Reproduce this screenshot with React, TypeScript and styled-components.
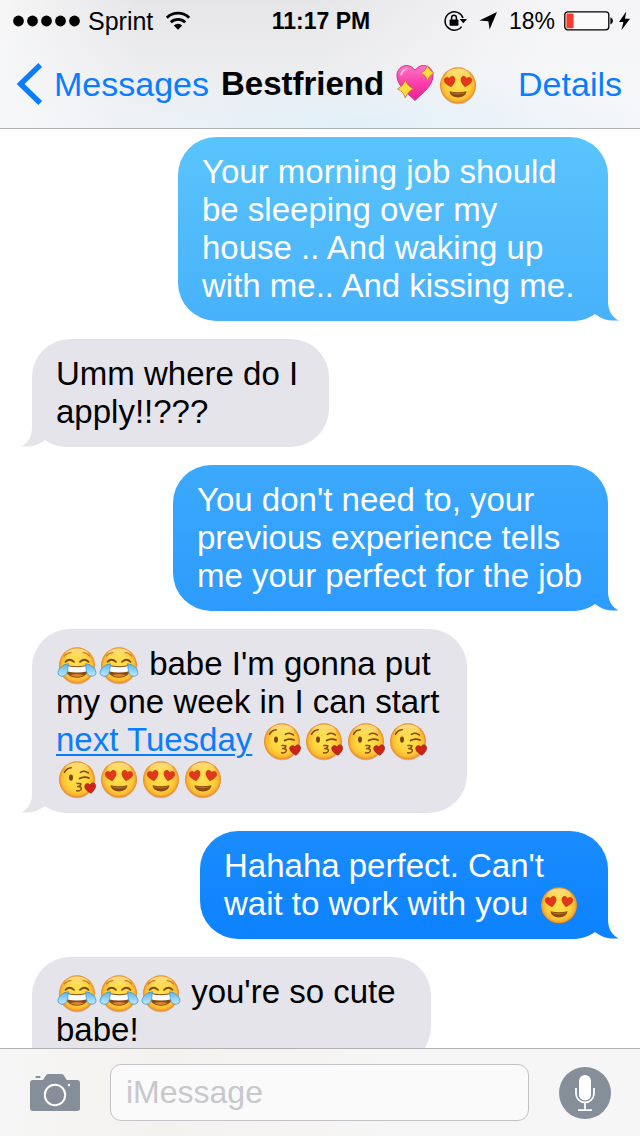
import React, { useId } from "react";
import styled, { createGlobalStyle, css } from "styled-components";

const GlobalStyle = createGlobalStyle`
  * { box-sizing: border-box; }
  html, body { margin: 0; padding: 0; }
  body {
    background: #fff;
    color: #000;
    font-family: "Liberation Sans", Arial, sans-serif;
  }
`;

const BLUE = "#0a7cff";
const SLATE = "#868f99";
const GRAY = "#e5e4ea";
const LINE_HEIGHT = 38;
const BUBBLE_PAD = 16;

const Screen = styled.main`
  display: flex;
  flex-direction: column;
  height: 100vh;
  overflow: hidden;
`;

const Header = styled.header`
  flex: none;
  border-bottom: 1px solid #b0b1b4;
  background:
    radial-gradient(ellipse 50% 50% at 56% 100%, rgba(222, 239, 250, 0.8), rgba(222, 239, 250, 0)),
    linear-gradient(180deg, rgba(247, 248, 250, 0), rgba(247, 248, 250, 0.7)),
    linear-gradient(90deg, #f6f6f7, #e6e6e8 22%, #e6e6e8 50%, #f5f5f7 85%);
`;

const StatusBar = styled.div`
  display: grid;
  grid-template-columns: 1fr auto 1fr;
  align-items: center;
  height: 40px;
  padding: 2px 10px 0 12px;
  font-size: 25px;
  line-height: 28px;
`;

const StatusGroup = styled.div<{ $end?: boolean }>`
  display: flex;
  align-items: center;
  gap: ${(p) => (p.$end ? 12 : 8)}px;
  justify-content: ${(p) => (p.$end ? "flex-end" : "flex-start")};
`;

const Power = styled.div`
  display: flex;
  align-items: center;
  gap: 8px;
`;

const Clock = styled.time`
  font-size: 23px;
  font-weight: 700;
`;

const Percent = styled.span`
  font-size: 23px;
`;

const NavBar = styled.nav`
  display: flex;
  align-items: center;
  height: 88px;
  padding: 0 18px 0 16px;
  font-size: 34px;
  line-height: 38px;
  white-space: nowrap;
`;

const NavLink = styled.a`
  display: flex;
  align-items: center;
  gap: 10px;
  color: ${BLUE};
  text-decoration: none;
`;

const Title = styled.h1`
  flex: 1;
  margin: 0 0 0 12px;
  font-size: 33px;
  line-height: 38px;
  font-weight: 700;
`;

const Thread = styled.ol`
  display: flex;
  flex: 1;
  flex-direction: column;
  gap: 18px;
  min-height: 0;
  margin: 0;
  padding: 8px 32px;
  overflow: auto;
  scrollbar-width: none;
  list-style: none;
`;

const sent = css<{ $from: string; $to: string }>`
  align-self: flex-end;
  background: linear-gradient(${(p) => p.$from}, ${(p) => p.$to});
  color: #fff;
`;

const received = css`
  align-self: flex-start;
  background: ${GRAY};
`;

const Bubble = styled.li<{ $mine: boolean; $width: number; $from: string; $to: string }>`
  position: relative;
  flex: none;
  width: ${(p) => p.$width}px;
  max-width: 100%;
  padding: ${BUBBLE_PAD}px 0 ${BUBBLE_PAD}px 24px;
  border-radius: 38px;
  font-size: 33px;
  line-height: ${LINE_HEIGHT}px;
  white-space: nowrap;
  ${(p) => (p.$mine ? sent : received)}
`;

const Line = styled.div`
  height: ${LINE_HEIGHT}px;
`;

const Tail = styled.svg<{ $mine: boolean }>`
  position: absolute;
  bottom: 0;
  ${(p) => (p.$mine ? "right: -12px;" : "left: -12px; transform: scaleX(-1);")}
`;

const DateLink = styled.a`
  color: ${BLUE};
  text-decoration: underline;
  text-decoration-thickness: 2px;
  text-underline-offset: 3px;
`;

const EmojiSvg = styled.svg`
  overflow: visible;
  vertical-align: top;
`;

const Composer = styled.form`
  display: flex;
  flex: none;
  align-items: center;
  gap: 30px;
  padding: 15px 29px 15px 30px;
  border-top: 1px solid #b0b0b3;
  background: linear-gradient(90deg, #f6f6f6, #f4f2ef 25%, #f6f6f6 65%);
`;

const IconButton = styled.button`
  display: flex;
  flex: none;
  padding: 0;
  border: 0;
  background: none;
`;

const MessageInput = styled.input`
  flex: 1;
  min-width: 0;
  height: 57px;
  padding: 0 15px;
  border: 1px solid #c3c3c7;
  border-radius: 11px;
  background: #fafafa;
  color: #000;
  font-family: inherit;
  font-size: 32px;
  &::placeholder { color: #c7c7cc; opacity: 1; }
`;

const HiddenDefs = styled.svg`
  position: absolute;
`;

function Paints() {
  return (
    <HiddenDefs width="0" height="0" aria-hidden="true">
      <defs>
        <radialGradient id="skin" cx="50%" cy="50%" r="50%">
          <stop offset="0" stopColor="#ffe14e" />
          <stop offset="0.6" stopColor="#fed33c" />
          <stop offset="0.86" stopColor="#fbb932" />
          <stop offset="1" stopColor="#e8892a" />
        </radialGradient>
        <linearGradient id="shine" x1="0" y1="0" x2="0" y2="1">
          <stop offset="0" stopColor="#fff3b0" stopOpacity="0.7" />
          <stop offset="1" stopColor="#ffe76b" stopOpacity="0" />
        </linearGradient>
        <linearGradient id="pink" x1="0" y1="0" x2="0" y2="1">
          <stop offset="0" stopColor="#ff77c2" />
          <stop offset="0.5" stopColor="#fb3fab" />
          <stop offset="1" stopColor="#e81f93" />
        </linearGradient>
        <linearGradient id="tear" x1="0" y1="0" x2="0" y2="1">
          <stop offset="0" stopColor="#5db5e6" />
          <stop offset="1" stopColor="#bfeaff" />
        </linearGradient>
      </defs>
    </HiddenDefs>
  );
}

function Face({ label, children }: { label: string; children: React.ReactNode }) {
  return (
    <EmojiSvg width="42" height="38" viewBox="0 0 42 38" role="img" aria-label={label}>
      <ellipse cx="21" cy="21.5" rx="17.5" ry="17.8" fill="#a8651c" opacity="0.4" />
      <circle cx="21" cy="20.3" r="18" fill="url(#skin)" />
      <ellipse cx="21" cy="10.5" rx="12" ry="7" fill="url(#shine)" />
      {children}
    </EmojiSvg>
  );
}

const EYE_HEART = "M0 5.5C-3 3.2-5.4 1-5.4-1.6C-5.4-5-1.4-5.6 0-2.6C1.4-5.6 5.4-5 5.4-1.6C5.4 1 3 3.2 0 5.5Z";

function HeartEyes() {
  return (
    <Face label="Smiling face with heart eyes">
      <path d={EYE_HEART} transform="translate(13 16.4) rotate(-12)" fill="#e2361f" stroke="#b8340f" strokeWidth="0.6" />
      <path d={EYE_HEART} transform="translate(29 16.4) rotate(12)" fill="#e2361f" stroke="#b8340f" strokeWidth="0.6" />
      <path d="M12.5 26.2Q21 28.4 29.5 26.2C29 30.2 25.5 32.4 21 32.4S13 30.2 12.5 26.2Z" fill="#8a4a12" />
      <path d="M14 27.2Q21 29.2 28 27.2L27.2 28.6Q21 30.2 14.8 28.6Z" fill="#b5741e" />
    </Face>
  );
}

function Joy() {
  return (
    <Face label="Face with tears of joy">
      <path d="M8.5 11Q11.5 7.4 15 7.6M33.5 11Q30.5 7.4 27 7.6" fill="none" stroke="#c98422" strokeWidth="1.2" strokeLinecap="round" />
      <path d="M9.5 16.8Q13.5 12.6 18 16.8M24 16.8Q28.5 12.6 32.5 16.8" fill="none" stroke="#7a4a12" strokeWidth="1.8" strokeLinecap="round" />
      <path d="M8.4 19.6Q21 22.8 33.6 19.6C33.6 28.6 28 32.8 21 32.8S8.4 28.6 8.4 19.6Z" fill="#8a4a12" />
      <path d="M9 20.6Q21 23.8 33 20.6C32.8 23 32.2 24.8 31.4 26.2Q21 28.8 10.6 26.2C9.8 24.8 9.2 23 9 20.6Z" fill="#fff" />
      <path d="M14 30.2Q21 27.8 28 30.2Q21 33.6 14 30.2Z" fill="#d8842c" />
      <path d="M12.4 18.8C8 19.4 2.4 22.4 2 27.6C1.9 31.8 8.8 32.6 10.8 28.6C12.2 25.6 11.8 22.4 12.4 18.8Z" fill="url(#tear)" stroke="#3f94c9" strokeWidth="0.8" />
      <path d="M29.6 18.8C34 19.4 39.6 22.4 40 27.6C40.1 31.8 33.2 32.6 31.2 28.6C29.8 25.6 30.2 22.4 29.6 18.8Z" fill="url(#tear)" stroke="#3f94c9" strokeWidth="0.8" />
    </Face>
  );
}

function Kiss() {
  return (
    <Face label="Face throwing a kiss">
      <path d="M8.6 13.2Q11 9 15.2 8.8" fill="none" stroke="#7a4a12" strokeWidth="1.6" strokeLinecap="round" />
      <path d="M24.4 13.4Q28.5 10.8 32.4 14" fill="none" stroke="#7a4a12" strokeWidth="1.5" strokeLinecap="round" />
      <ellipse cx="15" cy="18.6" rx="2" ry="3.1" fill="#77450f" />
      <path d="M23.6 19.6Q28 16.8 33 19" fill="none" stroke="#77450f" strokeWidth="1.8" strokeLinecap="round" />
      <path d="M21 24.6Q26.5 24 24.2 26.4Q23 27.6 21.6 27.6Q26.6 27.6 25 30.6Q23.8 32.2 20.6 31.8" fill="none" stroke="#8a4a12" strokeWidth="1.5" strokeLinecap="round" strokeLinejoin="round" />
      <path d={EYE_HEART} transform="translate(34.4 28.8) rotate(-8)" fill="#cf2318" stroke="#8c1d10" strokeWidth="0.7" />
    </Face>
  );
}

const SPARKLE = "M0-7.5Q1.8-2.2 6.8 0Q1.8 2 0 7.5Q-1.8 2-6.8 0Q-1.8-2.2 0-7.5Z";

function SparklingHeart() {
  return (
    <EmojiSvg width="44" height="38" viewBox="0 0 44 38" role="img" aria-label="Sparkling heart">
      <path d="M22 35.5C14 27.5 4 20.5 4 10.5C4 1 16-3.6 22 5.4C28-3.6 40 1 40 10.5C40 20.5 30 27.5 22 35.5Z" fill="url(#pink)" stroke="#d5278c" strokeWidth="1" />
      <path d="M7 9.5Q9 2.6 15.6 3.4Q10.4 5 8.6 11Z" fill="#ffc4e6" opacity="0.8" />
      <path d={SPARKLE} transform="translate(12.4 24) scale(1.15 1.2)" fill="#ffdc3d" stroke="#c9761d" strokeWidth="0.7" />
      <path d={SPARKLE} transform="translate(34.6 8) scale(0.95 1)" fill="#ffdc3d" stroke="#c9761d" strokeWidth="0.7" />
    </EmojiSvg>
  );
}

type Message = {
  mine: boolean;
  width: number;
  from?: string;
  to?: string;
  lines: React.ReactNode[];
};

const MESSAGES: Message[] = [
  {
    mine: true, width: 430, from: "#5ac4fb", to: "#47b2fb",
    lines: ["Your morning job should", "be sleeping over my", "house .. And waking up", "with me.. And kissing me."],
  },
  { mine: false, width: 297, lines: ["Umm where do I", "apply!!???"] },
  {
    mine: true, width: 435, from: "#3ca9fc", to: "#2c9bfd",
    lines: ["You don't need to, your", "previous experience tells", "me your perfect for the job"],
  },
  {
    mine: false, width: 435,
    lines: [
      <><Joy /><Joy /> babe I'm gonna put</>,
      "my one week in I can start",
      <><DateLink href="#date">next Tuesday</DateLink> <Kiss /><Kiss /><Kiss /><Kiss /></>,
      <><Kiss /><HeartEyes /><HeartEyes /><HeartEyes /></>,
    ],
  },
  {
    mine: true, width: 408, from: "#1a8cfe", to: "#0c82ff",
    lines: ["Hahaha perfect. Can't", <>wait to work with you <HeartEyes /></>],
  },
  { mine: false, width: 399, lines: [<><Joy /><Joy /><Joy /> you're so cute</>, "babe!"] },
];

function MessageBubble({ mine, width, from = GRAY, to = GRAY, lines }: Message) {
  const paint = useId();
  const height = lines.length * LINE_HEIGHT + BUBBLE_PAD * 2;
  return (
    <Bubble $mine={mine} $width={width} $from={from} $to={to}>
      {lines.map((line, i) => <Line key={i}>{line}</Line>)}
      <Tail $mine={mine} width="52" height="40" viewBox="0 0 52 40" aria-hidden="true">
        <linearGradient id={paint} gradientUnits="userSpaceOnUse" x1="0" y1={40 - height} x2="0" y2="40">
          <stop offset="0" stopColor={from} />
          <stop offset="1" stopColor={to} />
        </linearGradient>
        <path d="M40 0V20C40 30 44 36.5 51 39.4C41 40.4 33.5 38 27 33C20 38.4 12 40 2 40L10 20Z" fill={`url(#${paint})`} />
      </Tail>
    </Bubble>
  );
}

export default function App() {
  return (
    <Screen>
      <GlobalStyle />
      <Paints />
      <Header>
        <StatusBar>
          <StatusGroup>
            <svg width="68" height="12" viewBox="0 0 68 12" role="img" aria-label="Signal strength">
              {[0, 1, 2, 3, 4].map((n) => <circle key={n} cx={6.5 + n * 14} cy="6" r="5.4" />)}
            </svg>
            <span>Sprint</span>
            <svg width="34" height="20" viewBox="0 0 34 20" role="img" aria-label="Wi-Fi">
              <g fill="none" stroke="#000" strokeWidth="2.8">
                <path d="M5.8 6.7A16.2 16.2 0 0 1 28.2 6.7" />
                <path d="M9.8 11.3A10.4 10.4 0 0 1 24.2 11.3" />
              </g>
              <path d="M12.8 14.4A6.2 6.2 0 0 1 21.2 14.4L17 18.8Z" />
            </svg>
          </StatusGroup>
          <Clock>11:17 PM</Clock>
          <StatusGroup $end>
            <svg width="24" height="22" viewBox="0 0 24 22" role="img" aria-label="Rotation lock">
              <path d="M20 8A9.2 9.2 0 1 0 18.6 16.6" fill="none" stroke="#000" strokeWidth="1.5" />
              <path d="M16.6 9H24L20.4 13.2Z" />
              <rect x="6.6" y="9.4" width="8.8" height="6.4" rx="0.8" />
              <path d="M8.6 10V7.8A2.4 2.6 0 0 1 13.4 7.8V10" fill="none" stroke="#000" strokeWidth="1.5" />
            </svg>
            <svg width="18" height="18" viewBox="0 0 18 18" role="img" aria-label="Location">
              <path d="M18 0L10.6 17.6L9.4 9.2L0.4 8.6Z" />
            </svg>
            <Power>
              <Percent>18%</Percent>
              <svg width="67" height="20" viewBox="0 0 67 20" role="img" aria-label="Battery charging">
                <rect x="1.8" y="0.8" width="44" height="18" rx="3" fill="#fbfbfc" stroke="#000" strokeWidth="1.3" />
                <rect x="3.4" y="2.4" width="7.2" height="14.8" rx="1" fill="#fb3b30" />
                <path d="M47.4 6.2Q50 7.2 50 9.8T47.4 13.4Z" />
                <path d="M63.2 0.4L56 11H60.4L58.4 19.2L67 7.8H62Z" />
              </svg>
            </Power>
          </StatusGroup>
        </StatusBar>
        <NavBar>
          <NavLink href="#messages">
            <svg width="28" height="42" viewBox="0 0 28 42" aria-hidden="true">
              <path d="M24.2 2L4.6 21L24.2 40" fill="none" stroke={BLUE} strokeWidth="5.4" />
            </svg>
            Messages
          </NavLink>
          <Title>Bestfriend <SparklingHeart /><HeartEyes /></Title>
          <NavLink href="#details">Details</NavLink>
        </NavBar>
      </Header>
      <Thread>
        {MESSAGES.map((m, i) => <MessageBubble key={i} {...m} />)}
      </Thread>
      <Composer onSubmit={(e) => e.preventDefault()}>
        <IconButton type="button" aria-label="Camera">
          <svg width="50" height="38" viewBox="0 0 50 38">
            <path d="M3 6H12.5C14.4 6 15 0 18.4 0H31.4C34.8 0 35.4 6 37.4 6H47Q50 6 50 9V34.6Q50 37 47 37H3Q0 37 0 34.6V9Q0 6 3 6Z" fill={SLATE} />
            <rect x="5.4" y="2" width="5.2" height="2" rx="1" fill={SLATE} />
            <circle cx="25" cy="21" r="10.2" fill="none" stroke="#fff" strokeWidth="2" />
            <circle cx="39" cy="11" r="1.2" fill="#fff" />
          </svg>
        </IconButton>
        <MessageInput type="text" aria-label="Message" placeholder="iMessage" />
        <IconButton type="button" aria-label="Dictate">
          <svg width="52" height="52" viewBox="0 0 52 52">
            <circle cx="26" cy="26" r="26" fill={SLATE} />
            <rect x="20" y="8" width="12" height="25.4" rx="6" fill="#fff" />
            <path d="M17 21V26.4A9 9 0 0 0 35 26.4V21M26 35.4V43M19 43.2H33" fill="none" stroke="#fff" strokeWidth="1.8" />
          </svg>
        </IconButton>
      </Composer>
    </Screen>
  );
}
